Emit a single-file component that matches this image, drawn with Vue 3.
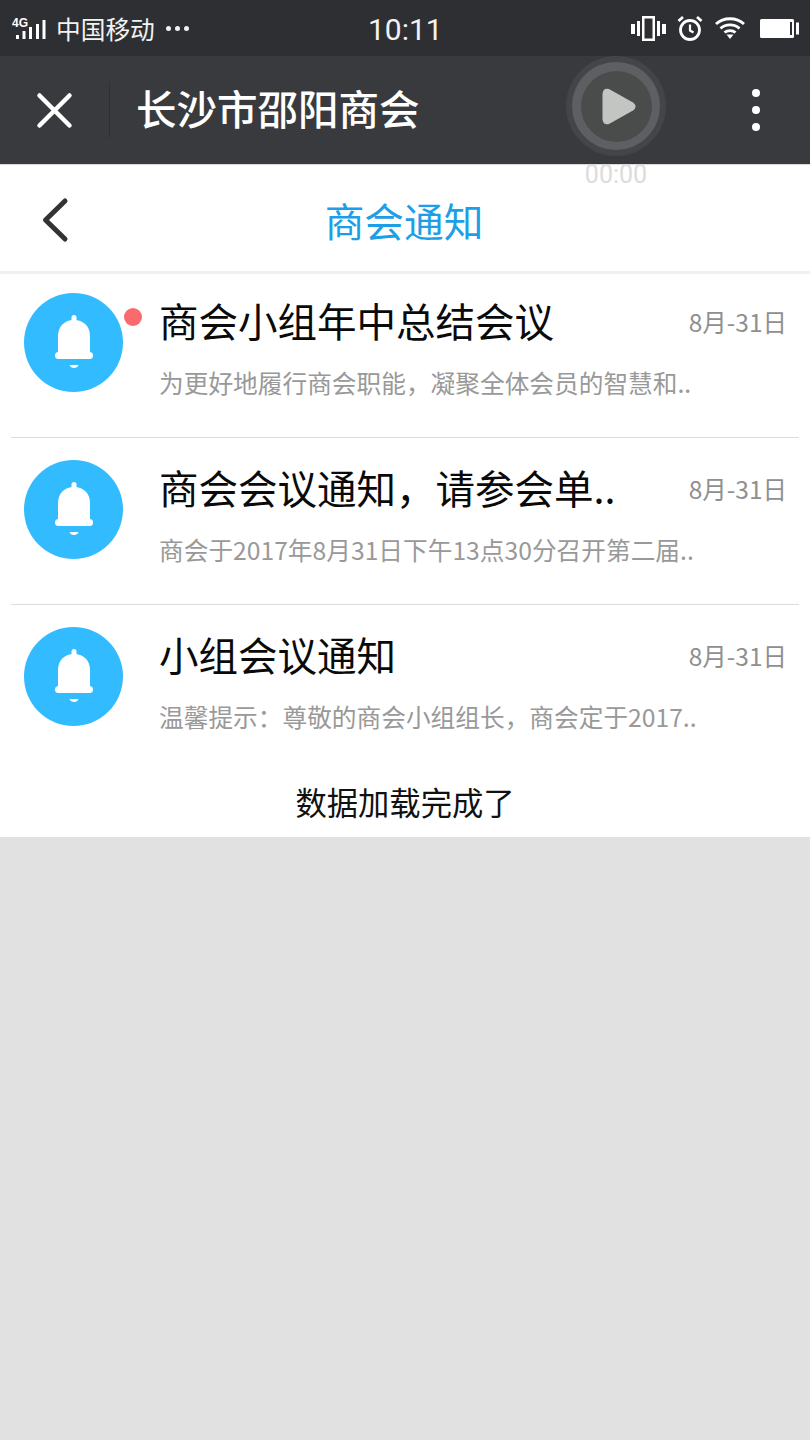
<script setup>
const items = [
  { title: '商会小组年中总结会议', desc: '为更好地履行商会职能，凝聚全体会员的智慧和..', date: '8月-31日', unread: true },
  { title: '商会会议通知，请参会单..', desc: '商会于2017年8月31日下午13点30分召开第二届..', date: '8月-31日', unread: false },
  { title: '小组会议通知', desc: '温馨提示：尊敬的商会小组组长，商会定于2017..', date: '8月-31日', unread: false },
]
</script>

<template>
  <div class="page">
    <div class="status">
      <div class="status-left">
        <svg class="signal" width="34" height="24" viewBox="0 0 34 24">
          <text x="0" y="11" class="fourg">4G</text>
          <rect x="4" y="19" width="3" height="4" fill="#fff"/>
          <rect x="10.500" y="15" width="3" height="8" fill="#fff"/>
          <rect x="17" y="11" width="3" height="12" fill="#fff"/>
          <rect x="24" y="8" width="3" height="15" fill="#fff"/>
          <rect x="30.500" y="4" width="3" height="19" fill="#fff"/>
        </svg>
        <span class="carrier">中国移动</span>
        <span class="dots"><i></i><i></i><i></i></span>
      </div>
      <div class="time">10:11</div>
      <div class="status-right">
        <svg width="35" height="25" viewBox="0 0 35 25" fill="#fff">
          <rect x="0" y="8" width="4" height="10"/>
          <rect x="6" y="5" width="3" height="15"/>
          <path fill-rule="evenodd" d="M11 0h13v25H11zM13.500 2.500v20h8v-20z"/>
          <rect x="26" y="5" width="3" height="15"/>
          <rect x="31" y="8" width="4" height="10"/>
        </svg>
        <svg width="26" height="26" viewBox="0 0 26 26" fill="none" stroke="#fff">
          <circle cx="13" cy="15" r="9.500" stroke-width="2.800"/>
          <path d="M13 9.500v6l3.500 2" stroke-width="2.200"/>
          <path d="M1.500 6l4.500-4M24.500 6l-4.500-4" stroke-width="2.800"/>
        </svg>
        <svg width="30" height="24" viewBox="0 0 30 24" fill="none" stroke="#fff" stroke-width="2.800">
          <path d="M1 8C8.500 1 21.500 1 29 8"/>
          <path d="M5.500 12.500c5-4.800 14-4.800 19 0"/>
          <path d="M9.500 16.500c3-2.600 8-2.600 11 0"/>
          <path d="M11.500 18.500h7L15 23z" fill="#fff" stroke="none"/>
        </svg>
        <svg class="battery" width="39" height="19" viewBox="0 0 39 19" fill="#fff">
          <rect x="0" y="0" width="34" height="19" rx="1.500"/>
          <rect x="30" y="3" width="2" height="13" fill="#2e2f33"/>
          <rect x="36" y="3.500" width="3" height="12"/>
        </svg>
      </div>
    </div>

    <div class="nav">
      <svg class="close" width="38" height="38" viewBox="0 0 38 38" stroke="#fff" stroke-width="4.500" stroke-linecap="round">
        <path d="M4.500 4.500l30 30M34.500 4.500l-30 30"/>
      </svg>
      <div class="nav-sep"></div>
      <div class="nav-title">长沙市邵阳商会</div>
      <div class="more"><i></i><i></i><i></i></div>
      <div class="player">
        <div class="player-ring">
          <div class="player-disc">
            <svg width="34" height="37" viewBox="0 0 34 37">
              <path d="M7 1 L31 14.500 Q36 18.500 31 22.500 L7 36 Q1 37.500 .5 31 V6 Q1 -.5 7 1z" fill="#c3c5c3"/>
            </svg>
          </div>
        </div>
        <div class="player-time">00:00</div>
      </div>
    </div>

    <div class="head">
      <svg class="back" width="30" height="48" viewBox="0 0 30 48" fill="none" stroke="#333" stroke-width="5" stroke-linecap="round" stroke-linejoin="round">
        <path d="M24 5 L4.500 24 L24 43"/>
      </svg>
      <div class="head-title">商会通知</div>
    </div>

    <div class="list">
      <div v-for="(item, i) in items" :key="i" class="row">
        <div class="avatar">
          <svg width="40" height="58" viewBox="0 0 40 58" fill="#fff">
            <rect x="17.500" y="0" width="5" height="10" rx="2.500"/>
            <path d="M4 38V21C4 11 11 5 20 5S36 11 36 21V38z"/>
            <rect x="1" y="37" width="38" height="7" rx="3.500"/>
            <path d="M15.500 50h9c-1 4-8 4-9 0z"/>
          </svg>
          <span v-if="item.unread" class="badge"></span>
        </div>
        <div class="body">
          <div class="line">
            <div class="title">{{ item.title }}</div>
            <div class="date">{{ item.date }}</div>
          </div>
          <div class="desc">{{ item.desc }}</div>
        </div>
      </div>
    </div>

    <div class="foot">数据加载完成了</div>
    <div class="rest"></div>
  </div>
</template>

<style>
html, body { margin: 0; padding: 0; }
</style>

<style scoped>
.page {
  width: 810px;
  height: 1440px;
  display: flex;
  flex-direction: column;
  background: #e1e1e1;
  font-family: "Noto Sans CJK SC", "Noto Sans", sans-serif;
  overflow: hidden;
}
.status {
  height: 56px;
  background: #2e2f33;
  display: flex;
  align-items: center;
  justify-content: space-between;
  padding: 0 11px 0 12px;
  position: relative;
  color: #fff;
  flex: none;
}
.status-left { display: flex; align-items: center; }
.fourg { font: 700 12px "Liberation Sans", sans-serif; fill: #fff; }
.carrier { margin-left: 10px; font-size: 24.700px; line-height: 56px; color: #f2f2f2; }
.dots { display: flex; gap: 4px; margin-left: 11px; }
.dots i { width: 5px; height: 5px; border-radius: 50%; background: #f2f2f2; }
.time {
  position: absolute;
  left: 368px;
  top: 0;
  font: 400 30px/59px Roboto, sans-serif;
  color: #f2f2f2;
}
.status-right { display: flex; align-items: center; gap: 11.500px; margin-right: 0; }
.battery { margin-left: 4px; }
.nav {
  height: 109px;
  background: #393a3e;
  box-sizing: border-box;
  border-bottom: 1px solid #d8d8d8;
  display: flex;
  align-items: center;
  position: relative;
  flex: none;
}
.close { margin-left: 35px; }
.nav-sep { width: 1px; height: 56px; background: #2f3034; margin-left: 36px; }
.nav-title { margin-left: 26px; margin-bottom: 4px; font-size: 40.500px; color: #fff; font-weight: 500; line-height: 104px; }
.more {
  position: absolute;
  left: 752px;
  top: 33px;
  display: flex;
  flex-direction: column;
  gap: 9px;
}
.more i { width: 8px; height: 8px; border-radius: 50%; background: #fff; display: block; }
.player {
  position: absolute;
  left: 566px;
  top: 0;
  width: 100px;
  height: 100px;
  border-radius: 50%;
  background: #444549;
  display: flex;
  align-items: center;
  justify-content: center;
}
.player-ring {
  width: 88px;
  height: 88px;
  border-radius: 50%;
  background: #5e5f63;
  display: flex;
  align-items: center;
  justify-content: center;
}
.player-disc {
  width: 71px;
  height: 71px;
  border-radius: 50%;
  background: #4a4b4b;
  display: flex;
  align-items: center;
  justify-content: center;
}
.player-disc svg { margin-left: 5px; margin-top: 1px; }
.player-time {
  position: absolute;
  top: 102px;
  left: 0;
  width: 100px;
  text-align: center;
  font: 400 25px/34px Roboto, sans-serif;
  color: #dcdcdc;
  z-index: 2;
}
.head {
  height: 109px;
  box-sizing: border-box;
  background: #fff;
  border-bottom: 3px solid #f0f0f0;
  position: relative;
  display: flex;
  align-items: center;
  justify-content: center;
  flex: none;
}
.back { position: absolute; left: 41px; top: 31px; }
.head-title { font-size: 39.700px; color: #1c9fe6; line-height: 60px; margin-top: 3px; margin-right: 2px; }
.list { background: #fff; padding: 0 11px; flex: none; }
.row {
  box-sizing: border-box;
  height: 167px;
  padding: 22px 13px 0 13px;
  display: flex;
  border-bottom: 1px solid #dcdcdc;
}
.row:first-child { height: 164px; padding-top: 19px; }
.row:last-child { border-bottom: none; height: 165px; }
.avatar {
  position: relative;
  width: 99px;
  height: 99px;
  border-radius: 50%;
  background: #33bbff;
  display: flex;
  align-items: center;
  justify-content: center;
  flex: none;
}
.avatar svg { margin-top: 2px; }
.badge {
  position: absolute;
  left: 100px;
  top: 15px;
  width: 18px;
  height: 18px;
  border-radius: 50%;
  background: #fb6a6d;
}
.body { flex: 1; margin-left: 36px; min-width: 0; margin-top: -3px; }
.line { display: flex; align-items: center; justify-content: space-between; height: 60px; }
.title { font-size: 39.500px; line-height: 60px; color: #0a0a0a; white-space: nowrap; }
.date { font-size: 24.500px; line-height: 60px; color: #8f8f8f; margin-right: -1px; margin-top: 4px; }
.desc { font-size: 24.700px; line-height: 36px; margin-top: 14px; color: #999; white-space: nowrap; }
.foot {
  height: 67px;
  background: #fff;
  text-align: center;
  font-size: 31.300px;
  line-height: 63px;
  color: #111;
  flex: none;
}
.rest { flex: 1; background: #e1e1e1; }
</style>
